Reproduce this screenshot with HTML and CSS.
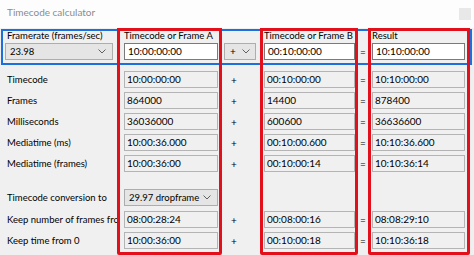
FILE: index.html
```html
<!DOCTYPE html>
<html lang="en">
<head>
  <meta charset="UTF-8">
  <title>Timecode calculator</title>
  <link rel="stylesheet" href="styles.css">
</head>
<body>
  <div class="titlebar">
    <span class="title">Timecode calculator</span>
    <span class="winbtn"></span>
  </div>

  <div class="calc">
    <!-- header row -->
    <div class="head c1">
      <div class="lbl">Framerate (frames/sec)</div>
      <div class="select wide">23.98 <svg class="chev" viewBox="0 0 8 5"><polyline points="0.5,0.5 4,4 7.5,0.5"/></svg></div>
    </div>
    <div class="head c2">
      <div class="lbl">Timecode or Frame A</div>
      <div class="field edit">10:00:00:00</div>
    </div>
    <div class="head c3">
      <div class="lbl">&nbsp;</div>
      <div class="select op">+ <svg class="chev" viewBox="0 0 8 5"><polyline points="0.5,0.5 4,4 7.5,0.5"/></svg></div>
    </div>
    <div class="head c4">
      <div class="lbl">Timecode or Frame B</div>
      <div class="field edit">00:10:00:00</div>
    </div>
    <div class="head c5">
      <div class="lbl">&nbsp;</div>
      <div class="sign">=</div>
    </div>
    <div class="head c6">
      <div class="lbl">Result</div>
      <div class="field edit">10:10:00:00</div>
    </div>

    <div class="row-label r3">Timecode</div>
    <div class="cell c2 r3"><div class="field">10:00:00:00</div></div>
    <div class="sign plus c3 r3">+</div>
    <div class="cell c4 r3"><div class="field">00:10:00:00</div></div>
    <div class="sign c5 r3">=</div>
    <div class="cell c6 r3"><div class="field">10:10:00:00</div></div>

    <div class="row-label r4">Frames</div>
    <div class="cell c2 r4"><div class="field">864000</div></div>
    <div class="sign plus c3 r4">+</div>
    <div class="cell c4 r4"><div class="field">14400</div></div>
    <div class="sign c5 r4">=</div>
    <div class="cell c6 r4"><div class="field">878400</div></div>

    <div class="row-label r5">Milliseconds</div>
    <div class="cell c2 r5"><div class="field">36036000</div></div>
    <div class="sign plus c3 r5">+</div>
    <div class="cell c4 r5"><div class="field">600600</div></div>
    <div class="sign c5 r5">=</div>
    <div class="cell c6 r5"><div class="field">36636600</div></div>

    <div class="row-label r6">Mediatime (ms)</div>
    <div class="cell c2 r6"><div class="field">10:00:36.000</div></div>
    <div class="sign plus c3 r6">+</div>
    <div class="cell c4 r6"><div class="field">00:10:00.600</div></div>
    <div class="sign c5 r6">=</div>
    <div class="cell c6 r6"><div class="field">10:10:36.600</div></div>

    <div class="row-label r7">Mediatime (frames)</div>
    <div class="cell c2 r7"><div class="field">10:00:36:00</div></div>
    <div class="sign plus c3 r7">+</div>
    <div class="cell c4 r7"><div class="field">00:10:00:14</div></div>
    <div class="sign c5 r7">=</div>
    <div class="cell c6 r7"><div class="field">10:10:36:14</div></div>

    <div class="row-label r9">Timecode conversion to</div>
    <div class="cell c2 r9"><div class="select">29.97 dropframe <svg class="chev" viewBox="0 0 8 5"><polyline points="0.5,0.5 4,4 7.5,0.5"/></svg></div></div>

    <div class="row-label r10">Keep number of frames from 0</div>
    <div class="cell c2 r10"><div class="field">08:00:28:24</div></div>
    <div class="sign plus c3 r10">+</div>
    <div class="cell c4 r10"><div class="field">00:08:00:16</div></div>
    <div class="sign c5 r10">=</div>
    <div class="cell c6 r10"><div class="field">08:08:29:10</div></div>

    <div class="row-label r11">Keep time from 0</div>
    <div class="cell c2 r11"><div class="field">10:00:36:00</div></div>
    <div class="sign plus c3 r11">+</div>
    <div class="cell c4 r11"><div class="field">00:10:00:18</div></div>
    <div class="sign c5 r11">=</div>
    <div class="cell c6 r11"><div class="field">10:10:36:18</div></div>

    <!-- annotation frames -->
    <div class="mark red ma"></div>
    <div class="mark red mb"></div>
    <div class="mark red mr"></div>
    <div class="mark blue"></div>
  </div>
</body>
</html>
```

FILE: styles.css
```css
body {
  margin: 0;
  background: #f0f0f0;
  font-family: Lato, "Noto Sans", Arial, sans-serif;
  font-size: 9.5px;
  color: #000;
  width: 474px;
  height: 255px;
  overflow: hidden;
}

.titlebar {
  height: 28px;
  background: #fdfdfd;
  display: flex;
  justify-content: space-between;
  align-items: flex-start;
  padding: 0 3px 0 7px;
  box-sizing: border-box;
}

.title {
  color: #8c8c8c;
  font-size: 10px;
  margin-top: 6px;
}

.winbtn {
  width: 12px;
  height: 12px;
  margin-top: 8px;
  background: #e8e8e8;
}

.calc {
  display: grid;
  grid-template-columns: 116px 105px 38px 98px 10px 104px;
  grid-template-rows: 1px 36px 4px repeat(5, 21px) 12px 23px 21px 21px 4px;
  margin-left: 1px;
}

.head {
  grid-row: 2;
  display: flex;
  flex-direction: column;
}

.c1 { grid-column: 1; padding-left: 4px; padding-right: 4px; }
.c2 { grid-column: 2; padding-left: 7px; padding-right: 4px; }
.c3 { grid-column: 3; padding-left: 2px; padding-right: 4px; }
.c4 { grid-column: 4; padding-left: 4px; padding-right: 3px; }
.c5 { grid-column: 5; }
.c6 { grid-column: 6; padding-left: 4px; padding-right: 7px; }

.head .lbl {
  height: 14px;
  line-height: 14px;
  white-space: nowrap;
}

.c1 .lbl { padding-left: 2px; }

.r3 { grid-row: 4; }
.r4 { grid-row: 5; }
.r5 { grid-row: 6; }
.r6 { grid-row: 7; }
.r7 { grid-row: 8; }
.r9 { grid-row: 10; }
.r10 { grid-row: 11; }
.r11 { grid-row: 12; }

.row-label {
  grid-column: 1;
  padding-left: 6px;
  white-space: nowrap;
  overflow: hidden;
  display: flex;
  align-items: center;
}

.cell {
  display: flex;
  align-items: center;
}

.field {
  flex: 1;
  height: 17px;
  box-sizing: border-box;
  border: 1px solid #b4b4b4;
  background: #f0f0f0;
  font-size: 10px;
  line-height: 15px;
  padding-left: 2px;
  white-space: nowrap;
  overflow: hidden;
}

.field.edit {
  flex: none;
  background: #fff;
  border-color: #7a7a7a;
  padding-left: 3px;
}

.select {
  flex: 1;
  height: 17px;
  box-sizing: border-box;
  border: 1px solid #adadad;
  background: #e5e5e5;
  font-size: 9.5px;
  line-height: 15px;
  padding-left: 4px;
  padding-right: 6px;
  display: flex;
  justify-content: space-between;
  align-items: center;
  white-space: nowrap;
}

.head .select,
.head .field {
  flex: none;
}

.select.op {
  font-size: 10px;
  padding-left: 5px;
  padding-right: 5px;
}

.chev {
  width: 8px;
  height: 5px;
  fill: none;
  stroke: #606060;
  stroke-width: 1;
}

.sign {
  display: flex;
  align-items: center;
  justify-content: center;
  font-size: 10px;
}

.sign.plus {
  justify-content: flex-start;
  padding-left: 9px;
}

.head .sign {
  height: 17px;
}

.mark {
  grid-row: 1 / -1;
  pointer-events: none;
  box-sizing: border-box;
  z-index: 2;
}

.red {
  border: 3px solid #e3101b;
  border-radius: 0 0 2px 2px;
}

.ma { grid-column: 2; }
.mb { grid-column: 4; }
.mr { grid-column: 6; margin-right: 2px; }

.blue {
  grid-column: 1 / -1;
  grid-row: 2 / 3;
  border: 2px solid #1d6fdc;
  z-index: 1;
}
```
